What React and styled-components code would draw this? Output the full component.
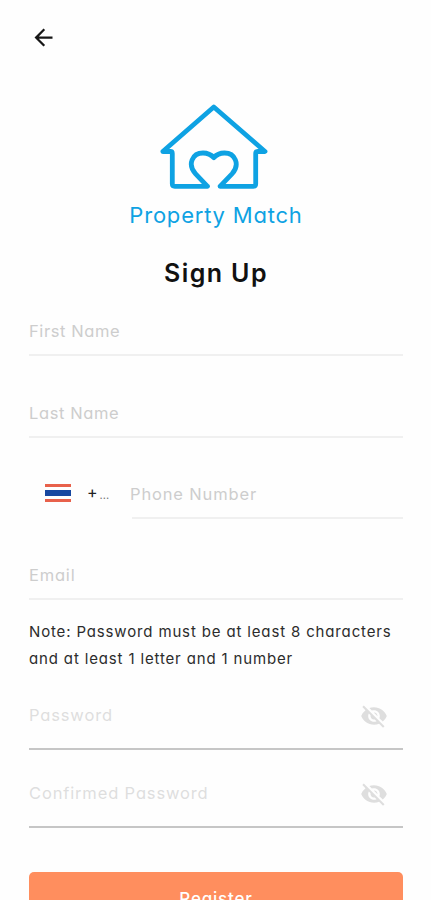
import React from "react";
import styled, { createGlobalStyle } from "styled-components";
import { MdArrowBack, MdVisibilityOff } from "react-icons/md";

const BrandColor = "#0ea2e3";

function App() {
    return (
        <>
            <GlobalStyle />
            <Page>
                <Header>
                    <BackButton aria-label="Back">
                        <MdArrowBack size={27} />
                    </BackButton>
                </Header>
                <Brand>
                    <Logo />
                    <BrandName>Property Match</BrandName>
                </Brand>
                <Title>Sign Up</Title>
                <Form>
                    <Field $height={50}>
                        <Label>First Name</Label>
                    </Field>
                    <Field $height={82}>
                        <Label>Last Name</Label>
                    </Field>
                    <PhoneRow>
                        <CountryCode>
                            <Flag />
                            <Plus>+</Plus>
                            <Dots>...</Dots>
                        </CountryCode>
                        <PhoneField>
                            <Label $spacing="0.85px">Phone Number</Label>
                        </PhoneField>
                    </PhoneRow>
                    <Field $height={81}>
                        <Label $spacing="0.8px">Email</Label>
                    </Field>
                    <Note>
                        <NoteLine>Note: Password must be at least 8 characters</NoteLine>
                        <NoteLine>and at least 1 letter and 1 number</NoteLine>
                    </Note>
                    <PasswordField label="Password" height={78} />
                    <PasswordField label="Confirmed Password" height={78} />
                    <RegisterButton>Register</RegisterButton>
                </Form>
            </Page>
        </>
    );
}

export default App;

function PasswordField(props) {
    return (
        <SecretField $height={props.height}>
            <Label $color="#dedede" $spacing="0.85px">
                {props.label}
            </Label>
            <MdVisibilityOff size={28} />
        </SecretField>
    );
}

function Logo() {
    return (
        <svg width="110" height="88" viewBox="0 0 110 88" fill="none">
            <path
                d="M48.500 84.300H15.800q-2.500 0-2.500-2.500V51.500q0-2-2-2H3.800L54.800 5L106 49.500h-7.300q-2 0-2 2v30.300q0 2.500-2.500 2.500H61L73 71.800C81.500 62.500 76 51 65.500 51c-4.500 0-8 1.500-10.700 4.700C52 52.500 48.500 51 44 51C33.500 51 28 62.500 36.600 71.800L48.500 84.300"
                stroke={BrandColor}
                strokeWidth="4.800"
                strokeLinecap="round"
                strokeLinejoin="round"
            />
        </svg>
    );
}

const GlobalStyle = createGlobalStyle`
    * {
        box-sizing: border-box;
    }
    body {
        margin: 0;
        background-color: #fefefe;
        font-family: Inter, "Open Sans", sans-serif;
        font-feature-settings: "cv11";
    }
`;

const Page = styled.main`
    height: 900px;
    padding: 0 28px 0 29px;
    overflow: hidden;
    display: flex;
    flex-direction: column;
`;

const Header = styled.header`
    height: 102px;
    padding: 24px 0 0 1px;
    flex-shrink: 0;
`;

const BackButton = styled.button`
    display: flex;
    padding: 0;
    border: 0;
    background: none;
    color: #161616;
`;

const Brand = styled.div`
    height: 146px;
    display: flex;
    flex-direction: column;
    align-items: center;
    flex-shrink: 0;
    svg {
        margin-right: 4px;
    }
`;

const BrandName = styled.div`
    margin-top: 10px;
    color: ${BrandColor};
    font-size: 22px;
    line-height: 30px;
    letter-spacing: 0.8px;
    white-space: nowrap;
`;

const Title = styled.h1`
    margin: 0;
    height: 58px;
    padding-top: 8px;
    color: #111;
    font-size: 25px;
    font-weight: 600;
    line-height: 34px;
    letter-spacing: 1.4px;
    text-align: center;
    flex-shrink: 0;
`;

const Form = styled.form`
    display: flex;
    flex-direction: column;
`;

const Field = styled.div`
    height: ${(props) => props.$height}px;
    padding-bottom: 11px;
    border-bottom: 2px solid #f0f0f0;
    display: flex;
    align-items: flex-end;
    flex-shrink: 0;
`;

const Label = styled.span`
    color: ${(props) => props.$color || "#cdcdcd"};
    font-size: 16.5px;
    line-height: 24px;
    letter-spacing: ${(props) => props.$spacing || "0.6px"};
    white-space: nowrap;
`;

const PhoneRow = styled.div`
    height: 81px;
    display: flex;
    align-items: flex-end;
    flex-shrink: 0;
`;

const CountryCode = styled.div`
    width: 103px;
    height: 48px;
    padding: 0 0 0 16px;
    display: flex;
    align-items: center;
`;

const Flag = styled.div`
    width: 26px;
    height: 18px;
    margin-bottom: 4px;
    background: linear-gradient(
        #e8614b 0 3px,
        #fefefe 3px 6px,
        #1748a0 6px 12px,
        #fefefe 12px 15px,
        #e8614b 15px 18px
    );
`;

const Plus = styled.span`
    margin: 0 0 7px 16px;
    color: #222;
    font-size: 16px;
    line-height: 20px;
`;

const Dots = styled.span`
    margin-left: 2px;
    color: #777;
    font-size: 11px;
    line-height: 20px;
`;

const PhoneField = styled(Field).attrs({ $height: 48 })`
    flex: 1;
    ${Label} {
        margin-left: -2px;
    }
`;

const Note = styled.div`
    height: 72px;
    padding-top: 19px;
    flex-shrink: 0;
`;

const NoteLine = styled.p`
    margin: 0;
    color: #2c2c2c;
    font-size: 15px;
    line-height: 26.5px;
    letter-spacing: 0.85px;
    white-space: nowrap;
`;

const SecretField = styled(Field)`
    padding: 0 15px 20px 0;
    border-color: #c6c6c6;
    justify-content: space-between;
    ${Label} {
        margin-bottom: 1px;
    }
    svg {
        margin-bottom: -2px;
        color: #dedede;
    }
`;

const RegisterButton = styled.button`
    height: 54px;
    margin-top: 44px;
    border: 0;
    border-radius: 5px;
    background-color: #ff8e5e;
    color: #fff;
    font-family: inherit;
    font-feature-settings: inherit;
    font-size: 17px;
    font-weight: 500;
    letter-spacing: 0.8px;
    flex-shrink: 0;
`;
